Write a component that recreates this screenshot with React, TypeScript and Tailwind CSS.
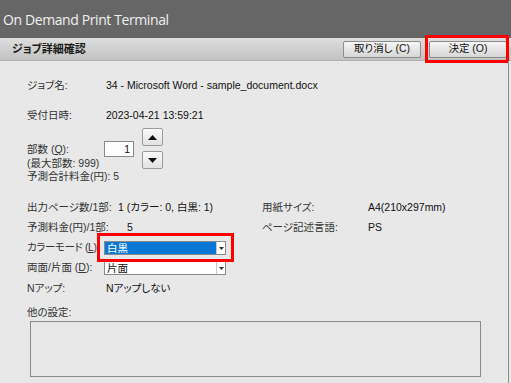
import React from "react";

const jp = {
  fontFamily: '"Liberation Sans", "Noto Sans CJK JP", sans-serif',
  fontFeatureSettings: '"palt"',
};

const Row = ({
  label,
  value,
  labelWidth = "w-[79px]",
  className = "",
}: {
  label: string;
  value: string;
  labelWidth?: string;
  className?: string;
}) => (
  <div className={`flex h-[14px] items-center ${className}`}>
    <div className={`${labelWidth} shrink-0 whitespace-nowrap text-[#333]`}>{label}</div>
    <div className="whitespace-nowrap text-[#111]">{value}</div>
  </div>
);

const Select = ({ value, active }: { value: string; active?: boolean }) => (
  <div className="flex h-[14px] w-[122px] border border-[#8a8a8a] bg-white">
    <div
      className={`flex-1 pl-[2px] leading-[12px] ${
        active ? "bg-[#0a78d4] text-white" : "text-[#111]"
      }`}
    >
      {value}
    </div>
    <div className="flex w-[9px] items-center justify-center border-l border-[#c8c8c8] bg-white">
      <svg width="5" height="3" viewBox="0 0 5 3">
        <path d="M0 0h5L2.5 3z" fill="#333" />
      </svg>
    </div>
  </div>
);

const SpinButton = ({ up }: { up?: boolean }) => (
  <div className="flex h-[18px] w-[21px] items-center justify-center rounded-[2px] border border-[#9a9a9a] bg-gradient-to-b from-[#fafafa] to-[#e2e2e2]">
    <svg width="9" height="5" viewBox="0 0 9 5">
      <path d={up ? "M0 5h9L4.5 0z" : "M0 0h9L4.5 5z"} fill="#111" />
    </svg>
  </div>
);

export default function App() {
  return (
    <div className="flex h-[383px] w-[511px] flex-col overflow-hidden bg-[#e8e8e8] text-[10.5px]" style={jp}>
      {/* TITLE BAR */}
      <div
        className="flex h-[38px] shrink-0 items-center bg-[#666666] pl-[3px] text-[14px] tracking-[-0.4px] text-[#f0f0f0]"
        style={{ fontFamily: '"Open Sans", sans-serif' }}
      >
        On Demand Print Terminal
      </div>

      {/* HEADER */}
      <div className="relative flex h-[23px] shrink-0 items-center justify-between border-b border-[#b0b0b0] bg-gradient-to-b from-[#dedede] to-[#c2c2c2] pl-[12px] pr-[4px]">
        <div className="text-[11px] font-bold text-[#1a1a1a]">ジョブ詳細確認</div>
        <div className="flex gap-[8px]">
          <button className="flex h-[17px] w-[78px] items-center justify-center rounded-[2px] border border-[#8c8c8c] bg-gradient-to-b from-[#f6f6f6] to-[#d6d6d6] text-[#111]">
            取り消し (C)
          </button>
          <button className="flex h-[17px] w-[78px] items-center justify-center rounded-[2px] border border-[#8c8c8c] bg-gradient-to-b from-[#f6f6f6] to-[#d6d6d6] text-[#111]">
            決定 (O)
          </button>
        </div>
        <div className="pointer-events-none absolute right-[2px] top-[-3px] h-[28px] w-[84px] border-[3px] border-[#ff0000]" />
      </div>

      {/* CONTENT */}
      <div className="relative mr-[2px] flex flex-1 flex-col border-r border-[#8e8e8e] pl-[27px]">
        <Row label="ジョブ名:" value="34 - Microsoft Word - sample_document.docx" className="mt-[18px]" />
        <Row label="受付日時:" value="2023-04-21 13:59:21" className="mt-[16px]" />

        {/* COPIES */}
        <div className="mt-[5px] flex h-[55px]">
          <div className="flex w-[77px] flex-col pt-[14px] text-[#333]">
            <div className="h-[14px] whitespace-nowrap">
              部数 (<span className="underline">Q</span>):
            </div>
            <div className="h-[13px] whitespace-nowrap">(最大部数: 999)</div>
            <div className="h-[14px] whitespace-nowrap">予測合計料金(円): 5</div>
          </div>
          <div className="mt-[13px] h-[16px] w-[30px] border border-[#8a8a8a] bg-white pr-[3px] text-right leading-[14px] text-[#111]">
            1
          </div>
          <div className="ml-[8px] flex flex-col gap-[5px]">
            <SpinButton up />
            <SpinButton />
          </div>
        </div>

        {/* INFO GRID */}
        <div className="mt-[18px] flex">
          <div className="flex w-[235px] flex-col">
            <Row label="出力ページ数/1部:" value="1 (カラー: 0, 白黒: 1)" labelWidth="w-[91px]" />
            <Row label="予測料金(円)/1部:" value="5" labelWidth="w-[100px]" className="mt-[6px]" />
          </div>
          <div className="flex flex-col">
            <Row label="用紙サイズ:" value="A4(210x297mm)" labelWidth="w-[106px]" />
            <Row label="ページ記述言語:" value="PS" labelWidth="w-[106px]" className="mt-[6px]" />
          </div>
        </div>

        <div className="relative mt-[6px] flex h-[14px] items-center">
          <div className="w-[77px] shrink-0 whitespace-nowrap tracking-[-0.4px] text-[#333]">
            カラーモード (<span className="underline">L</span>)
          </div>
          <Select value="白黒" active />
          <div className="pointer-events-none absolute left-[70px] top-[-8px] h-[29px] w-[137px] border-[3px] border-[#ff0000]" />
        </div>
        <div className="mt-[6px] flex h-[14px] items-center">
          <div className="w-[77px] shrink-0 whitespace-nowrap text-[#333]">
            両面/片面 (<span className="underline">D</span>):
          </div>
          <Select value="片面" />
        </div>
        <Row label="Nアップ:" value="Nアップしない" className="mt-[7px]" />

        <div className="mt-[9px] h-[14px] text-[#333]">他の設定:</div>
        <div className="ml-[3px] mt-[2px] h-[56px] w-[451px] border border-[#8a8a8a]" />
      </div>
    </div>
  );
}
